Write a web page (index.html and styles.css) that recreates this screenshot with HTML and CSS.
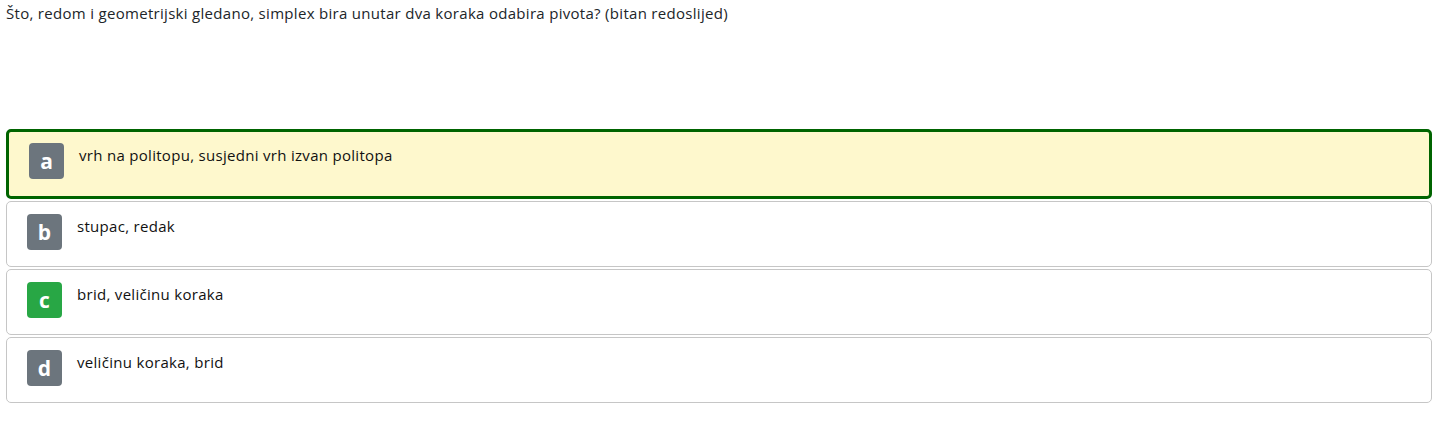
FILE: index.html
```html
<!DOCTYPE html>
<html lang="hr">
<head>
<meta charset="utf-8">
<title>Pitanje</title>
<link rel="stylesheet" href="styles.css">
</head>
<body>
<div class="page">
  <p class="question">Što, redom i geometrijski gledano, simplex bira unutar dva koraka odabira pivota? (bitan redoslijed)</p>
  <div class="options">
    <div class="option selected">
      <span class="badge">a</span>
      <span class="text">vrh na politopu, susjedni vrh izvan politopa</span>
    </div>
    <div class="option">
      <span class="badge">b</span>
      <span class="text">stupac, redak</span>
    </div>
    <div class="option">
      <span class="badge correct">c</span>
      <span class="text">brid, veličinu koraka</span>
    </div>
    <div class="option">
      <span class="badge">d</span>
      <span class="text">veličinu koraka, brid</span>
    </div>
  </div>
</div>
</body>
</html>
```

FILE: styles.css
```css
html, body {
  margin: 0;
  padding: 0;
  background: #ffffff;
}

body {
  font-family: "Open Sans", "Noto Sans", "Liberation Sans", sans-serif;
  color: #212529;
}

.page {
  padding: 2px 24px 0 6px;
}

.question {
  margin: 0;
  font-size: 15px;
  letter-spacing: 0.3px;
  line-height: 22px;
  height: 127px;
}

.options {
  display: flex;
  flex-direction: column;
  gap: 2px;
}

.option {
  display: flex;
  align-items: flex-start;
  gap: 15px;
  box-sizing: border-box;
  height: 66px;
  padding: 12px 20px;
  border: 1px solid #c6c6c6;
  border-radius: 5px;
  background: #ffffff;
}

.option.selected {
  height: 70px;
  border: 3px solid #006400;
  padding: 11px 20px;
  background: #fef8cd;
}

.badge {
  flex: none;
  display: flex;
  align-items: center;
  justify-content: center;
  width: 35px;
  height: 36px;
  border-radius: 4px;
  background: #6c757d;
  color: #ffffff;
  font-weight: 700;
  font-size: 21px;
  line-height: 1;
}

.badge.correct {
  background: #28a745;
}

.text {
  font-size: 15px;
  letter-spacing: 0.3px;
  line-height: 24px;
  padding-top: 0;
  color: #111111;
}
```
